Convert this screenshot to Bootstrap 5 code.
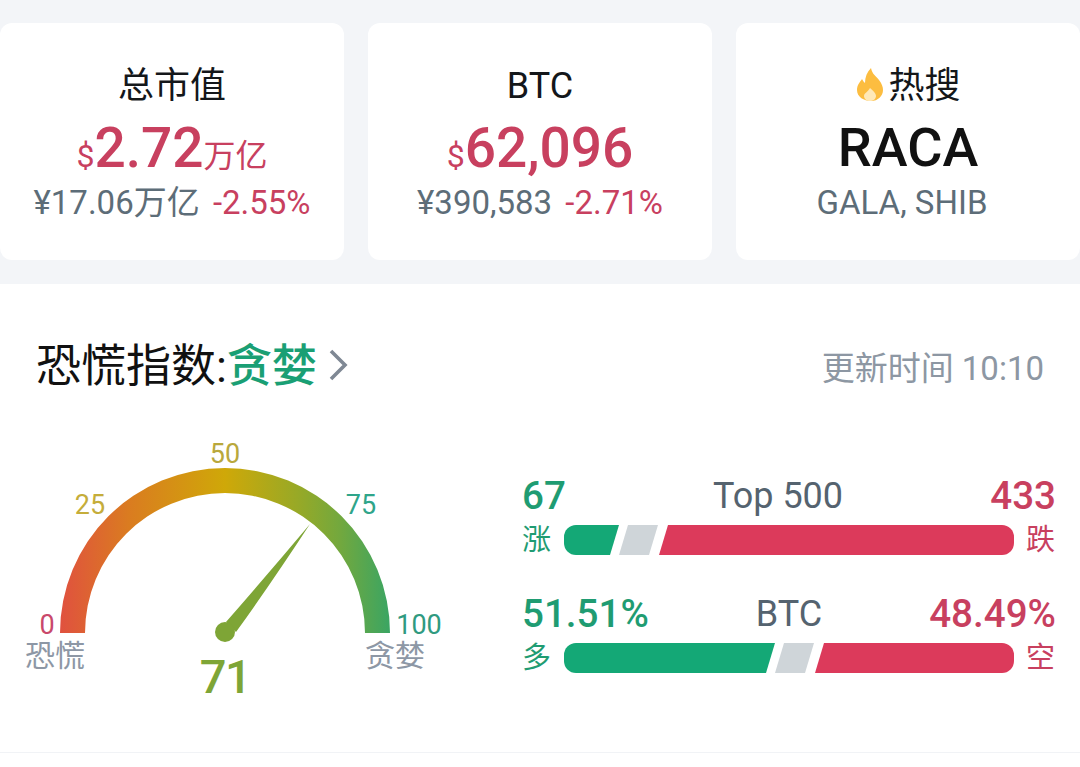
<!doctype html>
<html lang="zh"><head><meta charset="utf-8">
<link href="https://cdn.jsdelivr.net/npm/bootstrap@5.3.0/dist/css/bootstrap.min.css" rel="stylesheet">
<style>
html,body{width:1080px;height:767px;overflow:hidden;background:#fff}
body{font-family:Roboto,"Noto Sans CJK SC",sans-serif;color:#111}
.topband{background:#f3f5f8;padding:23px 0 24px;gap:24px}
.stat{flex:1 1 0;height:237px;border-radius:12px;background:#fff;padding-top:38px;text-align:center;white-space:nowrap}
.stat-title{font-size:36px;line-height:50px;color:#14171a}
.stat-main{font-size:55px;height:66px;line-height:66px;font-weight:500;margin-top:4px}
.stat-main.hot{font-size:54px;color:#111}
.up-red{color:#c8405f}
.stat-main small{font-size:32px;font-weight:400}
.stat-sub{font-size:33px;line-height:44px;color:#5d6d78}
.stat-sub b{font-weight:400;color:#c8405f;margin-left:5px}
.stat-sub.names{padding-right:12px}
.flame{width:30px;height:35px;vertical-align:-4px;margin-right:3px}
.panel{height:469px;border-bottom:1px solid #f1f3f6;padding:0 36px 0 36px}
.panel-head{height:158px;padding-top:58px}
.panel-title{font-size:45px;line-height:50px;color:#111}
.panel-title span{color:#1a9f74;font-weight:500}
.panel-title svg{margin-left:11px;margin-top:-4px}
.panel-time{font-size:33px;line-height:50px;color:#8d97a3;margin-top:2px}
.gauge{position:absolute;left:0;top:0}
.gauge text{font-family:Roboto,"Noto Sans CJK SC",sans-serif}
.num71{letter-spacing:-1.5px}
.stats-col{position:absolute;left:522px;top:474px;width:534px}
.hd{font-size:38.6px;line-height:44px;font-weight:500}
.hd em{font-style:normal;font-size:36px;font-weight:400;color:#55636f}
.txt-g{color:#1f9c72}.txt-r{color:#c8405f}
.lbl{font-size:29px;line-height:30px;width:30px;flex:none}
.barline{height:30px;margin-top:7px;margin-bottom:37px}
.track{width:450px;margin:0 12px;height:30px}
.seg{height:30px;flex:none}
.seg-g{background:#14a876;border-radius:12px 0 0 12px;clip-path:polygon(0 0,100% 0,calc(100% - 9px) 100%,0 100%)}
.seg-n{background:#cfd5d9;clip-path:polygon(9px 0,100% 0,calc(100% - 9px) 100%,0 100%)}
.seg-r{background:#dc3a5b;border-radius:0 12px 12px 0;margin-left:1px;clip-path:polygon(9px 0,100% 0,100% 100%,0 100%)}
</style></head>
<body>
<div class="d-flex topband">
  <div class="stat card border-0 d-block">
    <div class="stat-title">总市值</div>
    <div class="stat-main up-red"><small>$</small>2.72<small>万亿</small></div>
    <div class="stat-sub">¥17.06万亿 <b>-2.55%</b></div>
  </div>
  <div class="stat card border-0 d-block">
    <div class="stat-title">BTC</div>
    <div class="stat-main up-red"><small>$</small>62,096</div>
    <div class="stat-sub">¥390,583 <b>-2.71%</b></div>
  </div>
  <div class="stat card border-0 d-block">
    <div class="stat-title"><svg class="flame" viewBox="0 0 30 35"><path fill="#fcbd40" d="M16 1c1 6 5 8 8 12 3 4 4 7 4 10 0 6-5 11-12 11S2 30 2 23c0-5 3-8 5-11 1 2 2 3 3 4 0-6 2-11 6-15z"/><path fill="#ffe9b8" d="M15 21c3 3 6 5 6 8 0 3-3 5-6 5s-6-2-6-5c0-3 4-4 6-8z"/></svg>热搜</div>
    <div class="stat-main hot">RACA</div>
    <div class="stat-sub names">GALA, SHIB</div>
  </div>
</div>
<div class="panel">
  <div class="d-flex justify-content-between align-items-start panel-head">
    <div class="panel-title d-flex align-items-center">恐慌指数:<span>贪婪</span>
      <svg width="20" height="32" viewBox="0 0 20 32"><path d="M3 2l14 14L3 30" fill="none" stroke="#7f8894" stroke-width="3.6"/></svg></div>
    <div class="panel-time">更新时间 10:10</div>
  </div>
</div>
<svg class="gauge" width="500" height="767" viewBox="0 0 500 767">
  <defs><linearGradient id="gg" x1="60" x2="390" y1="0" y2="0" gradientUnits="userSpaceOnUse">
    <stop offset="0" stop-color="#e0513f"/><stop offset=".21" stop-color="#da7c20"/>
    <stop offset=".5" stop-color="#cfa808"/><stop offset=".73" stop-color="#95a928"/><stop offset=".85" stop-color="#72a83e"/><stop offset="1" stop-color="#3aa563"/>
  </linearGradient></defs>
  <path fill="url(#gg)" d="M60 633A165 165 0 0 1 390 633H365A140 140 0 0 0 85 633Z"/>
  <path fill="#7ea536" d="M310 524Q270 585 236 632L226 622Q268 574 310 524Z"/>
  <circle cx="225" cy="632" r="10" fill="#7ea536"/>
  <g font-size="27" text-anchor="middle">
    <text x="47" y="634" fill="#c9486b">0</text>
    <text x="90" y="514" fill="#c5ad3a">25</text>
    <text x="225" y="463" fill="#b9a83c">50</text>
    <text x="361" y="514" fill="#2fa58a">75</text>
    <text x="419" y="634" fill="#2f9a80">100</text>
  </g>
  <g font-size="30" text-anchor="middle" fill="#8d97a5">
    <text x="55" y="666">恐慌</text>
    <text x="395" y="666">贪婪</text>
  </g>
  <text class="num71" x="225" y="693" text-anchor="middle" font-size="47" font-weight="500" fill="#7ea536">71</text>
</svg>
<div class="stats-col">
  <div class="d-flex justify-content-between hd"><span class="txt-g">67</span><em>Top 500</em><span class="txt-r">433</span></div>
  <div class="d-flex align-items-center barline">
    <span class="lbl txt-g">涨</span>
    <div class="d-flex track">
      <div class="seg seg-g" style="width:55px"></div><div class="seg seg-n" style="width:39px"></div><div class="seg seg-r" style="width:355px"></div>
    </div>
    <span class="lbl txt-r">跌</span>
  </div>
  <div class="d-flex justify-content-between hd"><span class="txt-g">51.51%</span><em>BTC</em><span class="txt-r">48.49%</span></div>
  <div class="d-flex align-items-center barline">
    <span class="lbl txt-g">多</span>
    <div class="d-flex track">
      <div class="seg seg-g" style="width:211px"></div><div class="seg seg-n" style="width:39px"></div><div class="seg seg-r" style="width:199px"></div>
    </div>
    <span class="lbl txt-r">空</span>
  </div>
</div>
</body></html>
